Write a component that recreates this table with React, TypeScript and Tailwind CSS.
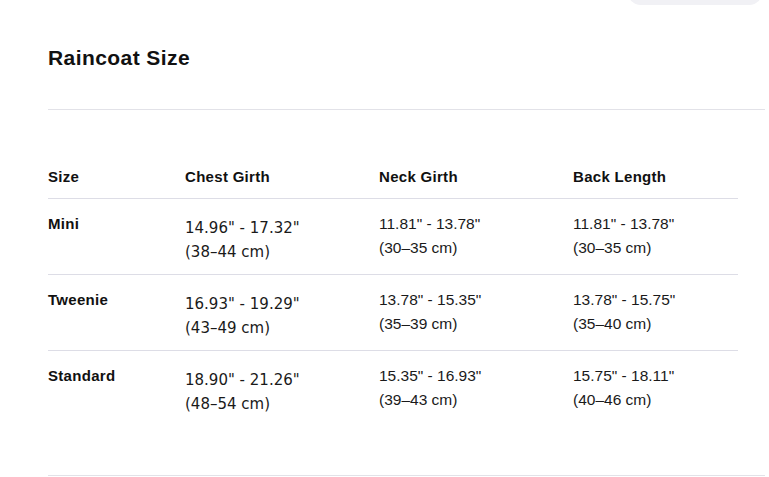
const rows = [
  {
    size: "Mini",
    chest: ['14.96" - 17.32"', "(38–44 cm)"],
    neck: ['11.81" - 13.78"', "(30–35 cm)"],
    back: ['11.81" - 13.78"', "(30–35 cm)"],
  },
  {
    size: "Tweenie",
    chest: ['16.93" - 19.29"', "(43–49 cm)"],
    neck: ['13.78" - 15.35"', "(35–39 cm)"],
    back: ['13.78" - 15.75"', "(35–40 cm)"],
  },
  {
    size: "Standard",
    chest: ['18.90" - 21.26"', "(48–54 cm)"],
    neck: ['15.35" - 16.93"', "(39–43 cm)"],
    back: ['15.75" - 18.11"', "(40–46 cm)"],
  },
];

const headers = ["Size", "Chest Girth", "Neck Girth", "Back Length"];

const App = () => {
  return (
    <div className="relative w-[769px] h-[477px] overflow-hidden bg-white font-['Liberation_Sans',Arial,sans-serif] text-[#111]">
      <div className="absolute right-[7px] top-[-20px] w-[134px] h-[25px] rounded-[14px] bg-[#f1f1f5]" />

      <div className="pl-[48px] pr-[4px]">
        <h2 className="pt-[44px] h-[109px] text-[21px] leading-[28px] font-bold tracking-[0.02em]">
          Raincoat Size
        </h2>
        <div className="border-t border-[#e2e2e8]" />

        <div className="mr-[27px] pt-[55px] h-[365px]">
          <div className="grid grid-cols-[137px_194px_194px_1fr] border-b border-[#dddde6] pb-[9px]">
            {headers.map((h) => (
              <div
                key={h}
                className="text-[15px] leading-[24px] font-bold tracking-[0.02em]"
              >
                {h}
              </div>
            ))}
          </div>

          {rows.map((r, i) => (
            <div
              key={r.size}
              className={`grid grid-cols-[137px_194px_194px_1fr] h-[76px] ${
                i < rows.length - 1 ? "border-b border-[#dddde6]" : ""
              }`}
            >
              <div className="pt-[13px] text-[15px] leading-[24px] font-bold tracking-[0.02em]">
                {r.size}
              </div>
              <div className="pt-[17px] font-['DejaVu_Sans',Verdana,sans-serif] text-[15px] leading-[24px] text-[#1a1a1a]">
                <div>{r.chest[0]}</div>
                <div>{r.chest[1]}</div>
              </div>
              <div className="pt-[13px] text-[15.5px] leading-[24px] text-[#1a1a1a]">
                <div>{r.neck[0]}</div>
                <div>{r.neck[1]}</div>
              </div>
              <div className="pt-[13px] text-[15.5px] leading-[24px] text-[#1a1a1a]">
                <div>{r.back[0]}</div>
                <div>{r.back[1]}</div>
              </div>
            </div>
          ))}
        </div>
        <div className="border-t border-[#e2e2e8]" />
      </div>
    </div>
  );
};

export default App;
